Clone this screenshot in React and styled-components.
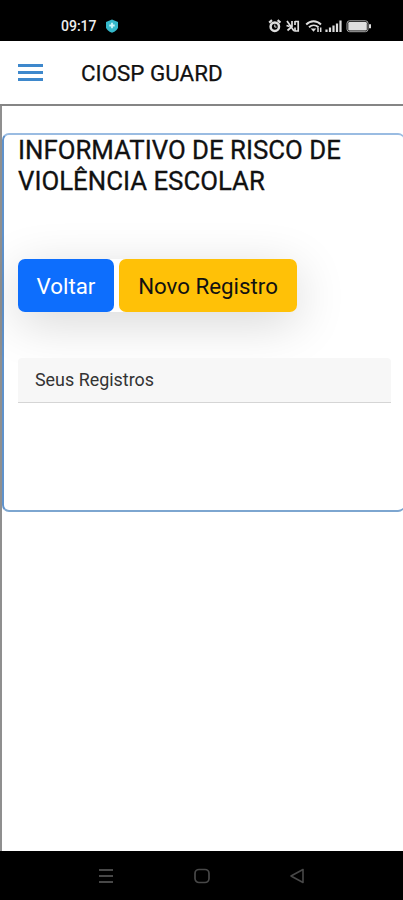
import React from 'react'
import styled, { createGlobalStyle } from 'styled-components'

export default function App() {
  return (
    <>
      <GlobalStyle />
      <Screen>
        <StatusBar>
          <Clock>09:17</Clock>
          <ShieldIcon />
          <StatusIcons />
        </StatusBar>
        <Header>
          <MenuButton aria-label='Menu'>
            <span />
            <span />
            <span />
          </MenuButton>
          <AppName>CIOSP GUARD</AppName>
        </Header>
        <Content>
          <Card>
            <Title>INFORMATIVO DE RISCO DE VIOLÊNCIA ESCOLAR</Title>
            <Actions>
              <Button $width={96} $bg='#0d6efd' $color='#fff'>Voltar</Button>
              <Button $width={178} $bg='#ffc107' $color='#111'>Novo Registro</Button>
            </Actions>
            <ListHeader>Seus Registros</ListHeader>
          </Card>
        </Content>
        <NavBar>
          <RecentIcon />
          <HomeIcon />
          <BackIcon />
        </NavBar>
      </Screen>
    </>
  )
}

function ShieldIcon() {
  return (
    <svg width='14' height='14' viewBox='0 0 14 14'>
      <path d='M7 .5 13 3v5.2c0 2.2-2.600 4.200-6 5.500-3.400-1.300-6-3.300-6-5.500V3z' fill='#35b9cb' />
      <path d='M7 3.800v5.400M4.300 6.500h5.400' stroke='#c9f6fa' strokeWidth='1.800' />
    </svg>
  )
}

function StatusIcons() {
  return (
    <StatusSvg width='105' height='16' viewBox='0 0 105 16' fill='none' stroke='#dedede'>
      {/* alarm */}
      <circle cx='6.800' cy='8.700' r='4.200' strokeWidth='2.500' />
      <path d='M1.200 4.600 4 2.200M12.400 4.600 9.600 2.200' strokeWidth='2.200' />
      <path d='M6.800 6.500v2.600h1.800' strokeWidth='1' />
      {/* vibrate */}
      <path d='M19 3l7 10M19.500 12.500l5-4.500M24 3v5M18.500 7.500l3 1' strokeWidth='1.700' />
      <path d='M27 3.500h3.200v9.500H27V9.500M27 3v4' strokeWidth='1.700' />
      {/* wifi */}
      <path d='M38.200 6.500c4.300-4.300 10.500-4.300 14.800 0M41 9.300c2.800-2.600 6.700-2.600 9.500 0' strokeWidth='1.900' />
      <path d='M42.700 10.500h5.600L45.500 13.800z' fill='#dedede' stroke='none' />
      <path d='M50 9.500v4.500M52.700 9.500v4.500' strokeWidth='1.500' />
      {/* signal */}
      <path d='M58.500 14v-2.500M62 14v-4.500M65.500 14V7.500M69 14V5.500M72.500 14V2.500' strokeWidth='2.200' />
      {/* battery */}
      <rect x='79' y='2.800' width='21' height='10.900' rx='2.500' stroke='#a8a8a8' strokeWidth='1' />
      <rect x='80.300' y='4' width='18.500' height='8.500' rx='1.200' fill='#dedede' stroke='none' />
      <path d='M102 6.300v4' strokeWidth='2' />
    </StatusSvg>
  )
}

function RecentIcon() {
  return (
    <svg width='16' height='16' viewBox='0 0 16 16' stroke='#484848' strokeWidth='2'>
      <path d='M1 2h14M1 8h14M1 14h14' />
    </svg>
  )
}

function HomeIcon() {
  return (
    <svg width='16' height='16' viewBox='0 0 16 16' fill='none' stroke='#484848' strokeWidth='1.700'>
      <rect x='1' y='1.500' width='14' height='13' rx='4' />
    </svg>
  )
}

function BackIcon() {
  return (
    <svg width='16' height='16' viewBox='0 0 16 16' fill='none' stroke='#484848' strokeWidth='1.600' strokeLinejoin='round'>
      <path d='M14 1.500v13L2 8z' />
    </svg>
  )
}

const GlobalStyle = createGlobalStyle`
  * {
    box-sizing: border-box;
  }
  body {
    margin: 0;
    background: #fff;
    font-family: Roboto, sans-serif;
  }
`
const Screen = styled.div`
  width: 403px;
  height: 900px;
  display: flex;
  flex-direction: column;
  overflow: hidden;
`
const StatusBar = styled.div`
  height: 41px;
  flex: none;
  display: flex;
  align-items: center;
  padding: 11px 30px 0 61px;
  background: #000;
`
const Clock = styled.div`
  width: 44px;
  font-size: 14px;
  line-height: 16px;
  font-weight: 500;
  color: #eee;
`
const StatusSvg = styled.svg`
  margin-left: auto;
`
const Header = styled.header`
  height: 65px;
  flex: none;
  display: flex;
  align-items: center;
  padding-left: 18px;
  border-bottom: 2px solid #858585;
`
const MenuButton = styled.div`
  width: 25px;
  height: 17px;
  display: flex;
  flex-direction: column;
  justify-content: space-between;
  span {
    height: 3px;
    background: #3e88cc;
  }
`
const AppName = styled.div`
  margin-left: 38px;
  font-size: 22.4px;
  line-height: 28px;
  color: #111;
  -webkit-text-stroke: 0.25px #111;
  white-space: nowrap;
`
const Content = styled.main`
  flex: 1;
  padding-top: 27px;
  border-left: 2px solid #8f8f8f;
`
const Card = styled.section`
  width: 403px;
  height: 379px;
  padding: 0 13px 0 14px;
  border-style: solid;
  border-width: 2px 1px 2px 2px;
  border-color: #9abce2 #9abce2 #7da6d0 #5f92cc;
  border-radius: 7px;
`
const Title = styled.h1`
  margin: 0;
  font-size: 25.8px;
  line-height: 31px;
  font-weight: 400;
  color: #111;
  -webkit-text-stroke: 0.3px #111;
`
const Actions = styled.div`
  width: fit-content;
  height: 53px;
  margin-top: 62px;
  display: flex;
  gap: 5px;
  border-radius: 7px;
  box-shadow: 0 11px 50px rgba(0, 0, 0, 0.16);
`
const Button = styled.div`
  width: ${props => props.$width}px;
  height: 53px;
  display: grid;
  place-items: center;
  border-radius: 7px;
  background: ${props => props.$bg};
  color: ${props => props.$color};
  font-size: 22.3px;
`
const ListHeader = styled.div`
  position: relative;
  height: 45px;
  margin-top: 46px;
  padding-left: 17px;
  line-height: 43px;
  font-size: 17.9px;
  color: #333;
  background: #f7f7f7;
  border-bottom: 1px solid #d5d5d5;
  border-radius: 4px 4px 0 0;
`
const NavBar = styled.nav`
  height: 49px;
  flex: none;
  display: flex;
  align-items: center;
  justify-content: space-between;
  padding: 0 98px;
  background: #000;
`
